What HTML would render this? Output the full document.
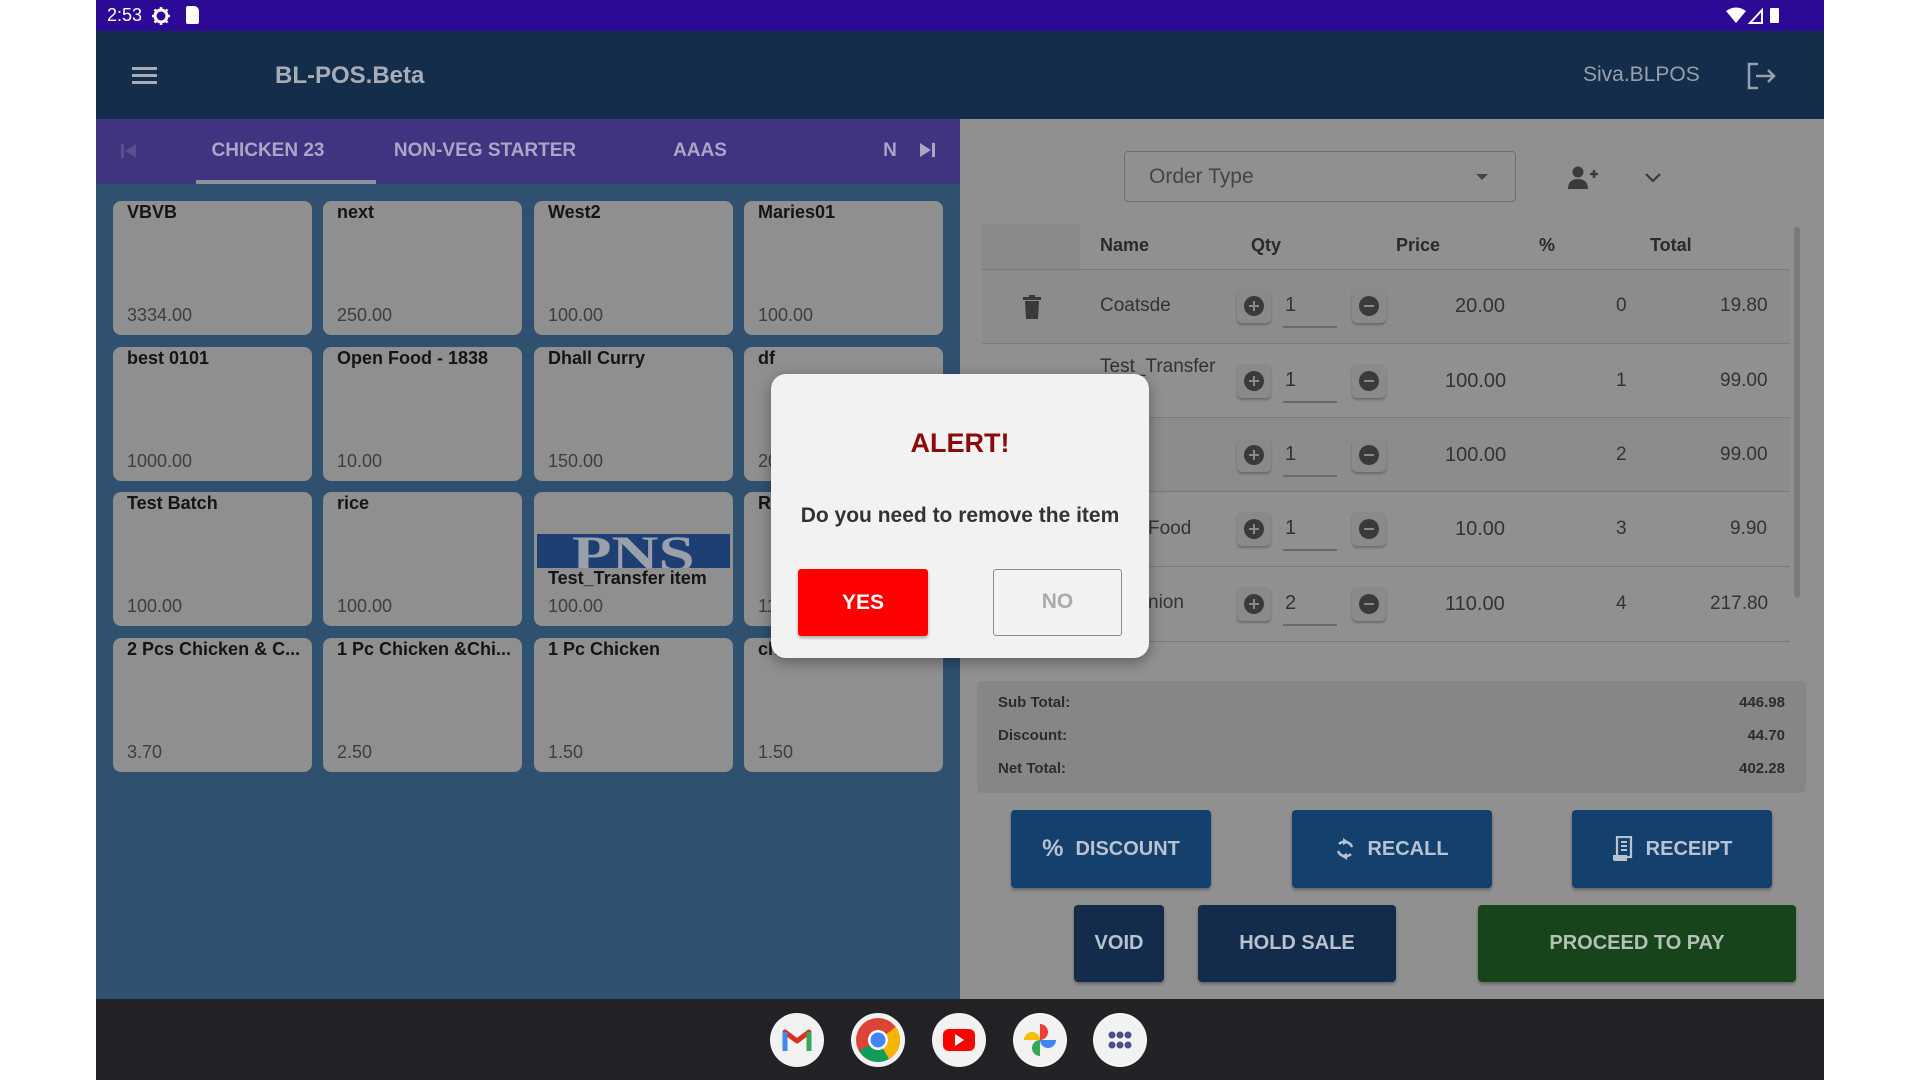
<!DOCTYPE html>
<html><head><meta charset="utf-8"><style>
*{margin:0;padding:0;box-sizing:border-box}
body{width:1920px;height:1080px;background:#fff;position:relative;overflow:hidden;font-family:"Liberation Sans",Roboto,sans-serif}
.a{position:absolute}
.card{position:absolute;width:199px;height:134px;background:#8f8f8f;border-radius:8px}
.card .n{position:absolute;left:14px;top:1px;font-size:18px;font-weight:bold;color:#151515;white-space:nowrap}
.card .p{position:absolute;left:14px;bottom:9px;font-size:18px;color:#3e3e3e}
.tab{position:absolute;top:140px;font-size:19px;font-weight:bold;color:#a9a6c6;transform:translateX(-50%)}
.th{position:absolute;top:235px;font-size:18px;font-weight:bold;color:#2a2a2a}
.rl{position:absolute;left:982px;width:808px;height:1px;background:#7a7a7a}
.cell{position:absolute;font-size:20px;color:#333}
.btnc{position:absolute;width:34px;height:34px;border-radius:5px;background:#8a8a8a;box-shadow:0 2px 2px rgba(0,0,0,.25)}
.btnc i{position:absolute;left:7px;top:7px;width:20px;height:20px;border-radius:50%;background:#3a3a3a}
.btnc i:before,.btnc i:after{content:"";position:absolute;background:#8a8a8a;left:5px;top:9px;width:10px;height:2px}
.btnc.pl i:after{left:9px;top:5px;width:2px;height:10px}
.ul{position:absolute;width:54px;height:2px;background:#6a6a6a}
.big{position:absolute;border-radius:4px;color:#b9c2cf;font-size:20px;font-weight:bold;display:flex;align-items:center;justify-content:center;gap:12px;box-shadow:0 2px 3px rgba(0,0,0,.3)}
.dock{position:absolute;top:1013px;width:54px;height:54px;border-radius:50%;background:#f2f2f2}
</style></head><body>
<div class="a" style="left:96px;top:0;width:1728px;height:31px;background:#2c0a96"></div>
<div class="a" style="left:107px;top:5px;color:#fff;font-size:18px">2:53</div>
<svg class="a" style="left:151px;top:6px" width="20" height="20" viewBox="0 0 20 20"><circle cx="10" cy="10" r="6" fill="none" stroke="#fff" stroke-width="3"/><path d="M10 1v4M10 15v4M1 10h4M15 10h4M3.5 3.5l3 3M13.5 13.5l3 3M3.5 16.5l3-3M13.5 6.5l3-3" stroke="#fff" stroke-width="2.5"/></svg>
<div class="a" style="left:186px;top:6px;width:13px;height:18px;background:#fff;border-radius:2px 5px 2px 2px"></div>
<svg class="a" style="left:1726px;top:6px" width="70" height="20" viewBox="0 0 70 20"><path d="M0 5 Q10 -2 20 5 L10 17Z" fill="#fff"/><path d="M24 17 L36 4 L36 17Z" fill="none" stroke="#fff" stroke-width="2"/><rect x="44" y="2" width="9" height="15" rx="1" fill="#fff"/></svg>
<div class="a" style="left:96px;top:31px;width:1728px;height:88px;background:#132d4b"></div>
<div class="a" style="left:132px;top:67px;width:25px;height:3px;background:#a6adb6;box-shadow:0 7px 0 #a6adb6,0 14px 0 #a6adb6"></div>
<div class="a" style="left:275px;top:62px;color:#a6adb6;font-size:24px;font-weight:bold">BL-POS.Beta</div>
<div class="a" style="left:1583px;top:63px;color:#98a0aa;font-size:21px">Siva.BLPOS</div>
<svg class="a" style="left:1746px;top:62px" width="32" height="28" viewBox="0 0 32 28"><path d="M12 2H3v24h9" fill="none" stroke="#98a0aa" stroke-width="2.5"/><path d="M10 14h18M22 8l6 6-6 6" fill="none" stroke="#98a0aa" stroke-width="2.5"/></svg>
<div class="a" style="left:96px;top:119px;width:864px;height:65px;background:#3e3480"></div>
<svg class="a" style="left:120px;top:142px" width="18" height="18" viewBox="0 0 18 18"><rect x="1" y="2" width="3" height="14" fill="#5a5090"/><path d="M16 2L5 9 16 16Z" fill="#5a5090"/></svg>
<div class="tab" style="left:268px">CHICKEN 23</div>
<div class="tab" style="left:485px">NON-VEG STARTER</div>
<div class="tab" style="left:700px">AAAS</div>
<div class="tab" style="left:890px">N</div>
<svg class="a" style="left:918px;top:141px" width="18" height="18" viewBox="0 0 18 18"><path d="M2 2L13 9 2 16Z" fill="#a9a6c6"/><rect x="14" y="2" width="3" height="14" fill="#a9a6c6"/></svg>
<div class="a" style="left:196px;top:180px;width:180px;height:4px;background:#9090a0"></div>
<div class="a" style="left:96px;top:184px;width:864px;height:815px;background:#305070"></div>
<div class="card" style="left:113px;top:201px"><div class="n">VBVB</div><div class="p">3334.00</div></div>
<div class="card" style="left:323px;top:201px"><div class="n">next</div><div class="p">250.00</div></div>
<div class="card" style="left:534px;top:201px"><div class="n">West2</div><div class="p">100.00</div></div>
<div class="card" style="left:744px;top:201px"><div class="n">Maries01</div><div class="p">100.00</div></div>
<div class="card" style="left:113px;top:347px"><div class="n">best 0101</div><div class="p">1000.00</div></div>
<div class="card" style="left:323px;top:347px"><div class="n">Open Food - 1838</div><div class="p">10.00</div></div>
<div class="card" style="left:534px;top:347px"><div class="n">Dhall Curry</div><div class="p">150.00</div></div>
<div class="card" style="left:744px;top:347px"><div class="n">df</div><div class="p">20.00</div></div>
<div class="card" style="left:113px;top:492px"><div class="n">Test Batch</div><div class="p">100.00</div></div>
<div class="card" style="left:323px;top:492px"><div class="n">rice</div><div class="p">100.00</div></div>
<div class="card" style="left:534px;top:492px"><div class="a" style="left:3px;top:42px;width:193px;height:34px;background:#1e3f73;overflow:hidden;text-align:center"><span style="display:inline-block;color:#9aa0aa;font-family:'Liberation Serif',serif;font-weight:bold;font-size:50px;line-height:38px;transform:scaleX(1.3)">PNS</span></div><div class="n" style="top:76px">Test_Transfer item</div><div class="p">100.00</div></div>
<div class="card" style="left:744px;top:492px"><div class="n">Rice</div><div class="p">110.00</div></div>
<div class="card" style="left:113px;top:638px"><div class="n">2 Pcs Chicken &amp; C...</div><div class="p">3.70</div></div>
<div class="card" style="left:323px;top:638px"><div class="n">1 Pc Chicken &amp;Chi...</div><div class="p">2.50</div></div>
<div class="card" style="left:534px;top:638px"><div class="n">1 Pc Chicken</div><div class="p">1.50</div></div>
<div class="card" style="left:744px;top:638px"><div class="n">chicken</div><div class="p">1.50</div></div>
<div class="a" style="left:960px;top:119px;width:864px;height:880px;background:#909090"></div>
<div class="a" style="left:1124px;top:151px;width:392px;height:51px;border:1.5px solid #6e6e6e;border-radius:4px"></div>
<div class="a" style="left:1149px;top:165px;font-size:21px;color:#444">Order Type</div>
<div class="a" style="left:1476px;top:174px;width:0;height:0;border-left:6px solid transparent;border-right:6px solid transparent;border-top:6px solid #444"></div>
<svg class="a" style="left:1568px;top:165px" width="30" height="26" viewBox="0 0 30 26"><circle cx="10" cy="7" r="5.5" fill="#3a3a3a"/><path d="M0 24c0-7 4-10 10-10s10 3 10 10Z" fill="#3a3a3a"/><path d="M22 9h8M26 5v8" stroke="#3a3a3a" stroke-width="2.5"/></svg>
<svg class="a" style="left:1645px;top:172px" width="16" height="12" viewBox="0 0 16 12"><path d="M1 2l7 7 7-7" fill="none" stroke="#3a3a3a" stroke-width="2.2"/></svg>
<div class="a" style="left:982px;top:224px;width:98px;height:45px;background:#8a8a8a"></div>
<div class="th" style="left:1100px">Name</div>
<div class="th" style="left:1251px">Qty</div>
<div class="th" style="left:1396px">Price</div>
<div class="th" style="left:1539px">%</div>
<div class="th" style="left:1650px">Total</div>
<div class="rl" style="top:269px"></div>
<div class="a" style="left:982px;top:270px;width:808px;height:73px;background:#8c8c8c"></div>
<div class="rl" style="top:343px"></div>
<div class="a" style="left:982px;top:418px;width:808px;height:73px;background:#8c8c8c"></div>
<div class="rl" style="top:417px"></div><div class="rl" style="top:491px"></div><div class="rl" style="top:566px"></div><div class="rl" style="top:641px"></div>
<div class="a" style="left:1794px;top:227px;width:6px;height:371px;background:#7a7a7a;border-radius:3px"></div>
<svg class="a" style="left:1023px;top:295px" width="18" height="24" viewBox="0 0 18 24"><rect x="0" y="2" width="18" height="3" fill="#3a3a3a"/><rect x="6" y="0" width="6" height="3" fill="#3a3a3a"/><path d="M2 6h14l-1 18H3Z" fill="#3a3a3a"/></svg>
<div class="cell" style="left:1100px;top:295px;font-size:19px">Coatsde</div>
<div class="cell" style="left:1100px;top:356px;font-size:19px">Test_Transfer</div>
<div class="cell" style="left:1148px;top:518px;font-size:19px">Food</div>
<div class="cell" style="left:1148px;top:592px;font-size:19px">nion</div>
<div class="btnc pl" style="left:1237px;top:289px"><i></i></div><div class="cell" style="left:1285px;top:294px">1</div><div class="ul" style="left:1283px;top:326px"></div><div class="btnc" style="left:1352px;top:289px"><i></i></div><div class="cell" style="left:1455px;top:295px">20.00</div><div class="cell" style="left:1616px;top:295px;font-size:19px">0</div><div class="cell" style="left:1720px;top:295px;font-size:19px">19.80</div>
<div class="btnc pl" style="left:1237px;top:364px"><i></i></div><div class="cell" style="left:1285px;top:369px">1</div><div class="ul" style="left:1283px;top:401px"></div><div class="btnc" style="left:1352px;top:364px"><i></i></div><div class="cell" style="left:1445px;top:370px">100.00</div><div class="cell" style="left:1616px;top:370px;font-size:19px">1</div><div class="cell" style="left:1720px;top:370px;font-size:19px">99.00</div>
<div class="btnc pl" style="left:1237px;top:438px"><i></i></div><div class="cell" style="left:1285px;top:443px">1</div><div class="ul" style="left:1283px;top:475px"></div><div class="btnc" style="left:1352px;top:438px"><i></i></div><div class="cell" style="left:1445px;top:444px">100.00</div><div class="cell" style="left:1616px;top:444px;font-size:19px">2</div><div class="cell" style="left:1720px;top:444px;font-size:19px">99.00</div>
<div class="btnc pl" style="left:1237px;top:512px"><i></i></div><div class="cell" style="left:1285px;top:517px">1</div><div class="ul" style="left:1283px;top:549px"></div><div class="btnc" style="left:1352px;top:512px"><i></i></div><div class="cell" style="left:1455px;top:518px">10.00</div><div class="cell" style="left:1616px;top:518px;font-size:19px">3</div><div class="cell" style="left:1730px;top:518px;font-size:19px">9.90</div>
<div class="btnc pl" style="left:1237px;top:587px"><i></i></div><div class="cell" style="left:1285px;top:592px">2</div><div class="ul" style="left:1283px;top:624px"></div><div class="btnc" style="left:1352px;top:587px"><i></i></div><div class="cell" style="left:1445px;top:593px">110.00</div><div class="cell" style="left:1616px;top:593px;font-size:19px">4</div><div class="cell" style="left:1710px;top:593px;font-size:19px">217.80</div>
<div class="a" style="left:977px;top:681px;width:829px;height:112px;background:#868686;border-radius:5px"></div>
<div class="a" style="left:998px;top:686px;font-size:15px;font-weight:bold;color:#2c2c2c;line-height:33px">Sub Total:<br>Discount:<br>Net Total:</div>
<div class="a" style="left:1700px;width:85px;top:686px;font-size:15px;font-weight:bold;color:#2c2c2c;line-height:33px;text-align:right">446.98<br>44.70<br>402.28</div>
<div class="big" style="left:1011px;top:810px;width:200px;height:78px;background:#14406e"><span style="font-size:24px">%</span>DISCOUNT</div>
<div class="big" style="left:1292px;top:810px;width:200px;height:78px;background:#14406e"><svg width="20" height="26" viewBox="0 0 20 26"><path d="M4 8a8 8 0 0 1 13 3M16 18a8 8 0 0 1-13-3" fill="none" stroke="#b9c2cf" stroke-width="2.5"/><path d="M8 2l6 4-6 3Z" fill="#b9c2cf"/><path d="M12 24l-6-4 6-3Z" fill="#b9c2cf"/></svg>RECALL</div>
<div class="big" style="left:1572px;top:810px;width:200px;height:78px;background:#14406e"><svg width="22" height="26" viewBox="0 0 22 26"><rect x="5" y="1" width="14" height="20" fill="none" stroke="#b9c2cf" stroke-width="2.2"/><path d="M9 6h6M9 10h6M9 14h6" stroke="#b9c2cf" stroke-width="2"/><path d="M1 19h14v6H3a2 2 0 0 1-2-2Z" fill="#b9c2cf"/></svg>RECEIPT</div>
<div class="big" style="left:1074px;top:905px;width:90px;height:77px;background:#132c4b">VOID</div>
<div class="big" style="left:1198px;top:905px;width:198px;height:77px;background:#132c4b">HOLD SALE</div>
<div class="big" style="left:1478px;top:905px;width:318px;height:77px;background:#17441a;color:#b5c0b6">PROCEED TO PAY</div>
<div class="a" style="left:96px;top:999px;width:1728px;height:81px;background:#222226"></div>
<div class="dock" style="left:770px"><svg width="54" height="54" viewBox="0 0 54 54"><path d="M15 38V19l12 9 12-9v19" fill="none" stroke="#d93025" stroke-width="5" stroke-linejoin="round"/><path d="M15 19v19" stroke="#4285f4" stroke-width="5"/><path d="M39 19v19" stroke="#34a853" stroke-width="5"/></svg></div>
<div class="dock" style="left:851px"><svg width="54" height="54" viewBox="0 0 54 54"><circle cx="27" cy="27" r="22" fill="#db4437"/><path d="M27 27L8 38A22 22 0 0 0 38 46Z" fill="#0f9d58"/><path d="M27 27L38 46A22 22 0 0 0 49 27 22 22 0 0 0 45 14Z" fill="#f4b400"/><circle cx="27" cy="27" r="10" fill="#fff"/><circle cx="27" cy="27" r="7.5" fill="#4285f4"/></svg></div>
<div class="dock" style="left:932px"><svg width="54" height="54" viewBox="0 0 54 54"><rect x="11" y="16" width="32" height="22" rx="6" fill="#f00"/><path d="M23 21l9 6-9 6Z" fill="#fff"/></svg></div>
<div class="dock" style="left:1013px"><svg width="54" height="54" viewBox="0 0 54 54"><path d="M27 27V11a8 8 0 0 1 0 16Z" fill="#ea4335"/><path d="M27 27h16a8 8 0 0 1-16 0Z" fill="#4285f4"/><path d="M27 27v16a8 8 0 0 1 0-16Z" fill="#34a853"/><path d="M27 27H11a8 8 0 0 1 16 0Z" fill="#fbbc04"/></svg></div>
<div class="dock" style="left:1093px"><svg width="54" height="54" viewBox="0 0 54 54"><g fill="#4a4e8a"><circle cx="19" cy="22" r="3.5"/><circle cx="27" cy="22" r="3.5"/><circle cx="35" cy="22" r="3.5"/><circle cx="19" cy="32" r="3.5"/><circle cx="27" cy="32" r="3.5"/><circle cx="35" cy="32" r="3.5"/></g></svg></div>
<div class="a" style="left:771px;top:374px;width:378px;height:284px;background:#f2f2f2;border-radius:15px;box-shadow:0 4px 14px rgba(0,0,0,.35)"></div>
<div class="a" style="left:771px;width:378px;top:428px;text-align:center;font-size:27px;font-weight:bold;color:#8b0a0a">ALERT!</div>
<div class="a" style="left:771px;width:378px;top:504px;text-align:center;font-size:21px;font-weight:bold;color:#333">Do you need to remove the item</div>
<div class="a" style="left:798px;top:569px;width:130px;height:67px;background:#f00;border-radius:3px;box-shadow:0 2px 3px rgba(0,0,0,.3);color:#fff;font-size:21px;font-weight:bold;text-align:center;line-height:67px">YES</div>
<div class="a" style="left:993px;top:569px;width:129px;height:67px;border:1.5px solid #8a8a8a;border-radius:3px;color:#aaa;font-size:21px;font-weight:bold;text-align:center;line-height:64px">NO</div>
</body></html>
